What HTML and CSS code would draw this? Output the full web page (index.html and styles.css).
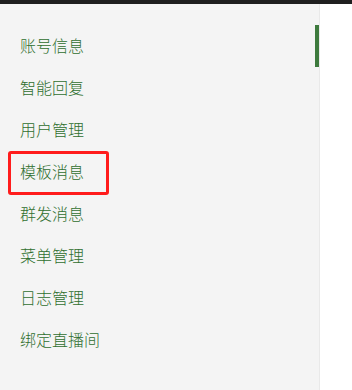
FILE: index.html
```html
<!DOCTYPE html>
<html lang="zh">
<head>
<meta charset="utf-8">
<link rel="stylesheet" href="styles.css">
</head>
<body>
<div class="topbar"></div>
<div class="page">
  <nav class="sidebar">
    <ul class="menu">
      <li class="item">账号信息</li>
      <li class="item">智能回复</li>
      <li class="item">用户管理</li>
      <li class="item item-marked">模板消息<span class="mark"></span></li>
      <li class="item">群发消息</li>
      <li class="item">菜单管理</li>
      <li class="item">日志管理</li>
      <li class="item">绑定直播间</li>
    </ul>
    <div class="thumb"></div>
  </nav>
  <main class="content"></main>
</div>
</body>
</html>
```

FILE: styles.css
```css
html, body {
  margin: 0;
  padding: 0;
  height: 100%;
  background: #ffffff;
}
body {
  font-family: "Noto Sans CJK SC", "Noto Sans", sans-serif;
  overflow: hidden;
}
.topbar {
  height: 4px;
  background: #1f1f1f;
}
.page {
  display: flex;
  height: 386px;
}
.sidebar {
  position: relative;
  width: 319px;
  background: #f4f4f4;
  border-right: 1px solid #e9e9e9;
}
.menu {
  list-style: none;
  margin: 0;
  padding: 20px 0 0 0;
}
.item {
  position: relative;
  height: 42px;
  line-height: 42px;
  padding-left: 20px;
  font-size: 16px;
  font-weight: 300;
  color: #2f6f2f;
}
.mark {
  position: absolute;
  left: 8px;
  top: 1px;
  width: 95px;
  height: 38px;
  border: 3px solid #ff1c1c;
  border-radius: 3px;
}
.thumb {
  position: absolute;
  right: 0;
  top: 21px;
  width: 4px;
  height: 42px;
  background: #3d7a3d;
}
.content {
  flex: 1;
}
```
